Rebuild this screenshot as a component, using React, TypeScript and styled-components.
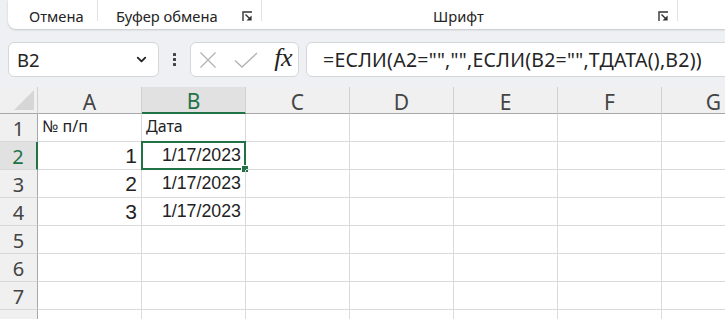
import React from "react";
import styled, { createGlobalStyle, css } from "styled-components";
import { ChevronDown } from "lucide-react";

const GREEN = "#217346";
const GRID = "#dadada";

const GlobalStyle = createGlobalStyle`
  html, body {
    margin: 0;
    padding: 0;
    background: #eef0f3;
    overflow: hidden;
  }
  body {
    font-family: "Noto Sans", "Open Sans", sans-serif;
  }
`;

const Page = styled.div`
  width: 725px;
  height: 319px;
  overflow: hidden;
  background: #eef0f3;
`;

/* Ribbon */
const Ribbon = styled.div`
  margin-left: 8px;
  height: 29px;
  background: #ffffff;
  border-bottom-left-radius: 8px;
  box-shadow: 0 1px 2px rgba(0, 0, 0, 0.18);
  display: flex;
  align-items: stretch;
`;

const Group = styled.div<{ $w: number; $pl: number }>`
  width: ${(p) => p.$w}px;
  padding-left: ${(p) => p.$pl}px;
  padding-right: 8px;
  box-sizing: border-box;
  display: flex;
  align-items: flex-start;
  justify-content: space-between;
  border-right: 1px solid #e2e2e2;
  height: 21px;
`;

const GroupLabel = styled.span`
  font-size: 14.7px;
  color: #242424;
  line-height: 1;
  padding-top: 9px;
`;

const Launcher = styled.svg`
  width: 11px;
  height: 11px;
  margin-top: 11px;
`;

const LauncherIcon = () => (
  <Launcher viewBox="0 0 11 11">
    <path d="M1 10 V1 H10" fill="none" stroke="#333" strokeWidth="1.4" />
    <path d="M3.5 3.5 L8.6 8.6" fill="none" stroke="#333" strokeWidth="1.4" />
    <path d="M4.5 9.6 H9.6 V4.5 Z" fill="#333" />
  </Launcher>
);

/* Formula bar */
const FormulaRow = styled.div`
  display: flex;
  align-items: center;
  margin-top: 13px;
  padding-left: 8px;
  height: 35px;
`;

const Box = styled.div`
  height: 35px;
  box-sizing: border-box;
  background: #ffffff;
  border: 1px solid #d4d6d9;
  border-radius: 6px;
  display: flex;
  align-items: center;
`;

const NameBox = styled(Box)`
  width: 151px;
  padding: 0 9px 0 8px;
  justify-content: space-between;
  font-size: 18.5px;
  color: #242424;
`;

const Dots = styled.div`
  width: 31px;
  display: flex;
  flex-direction: column;
  align-items: center;
  gap: 2px;
  span {
    width: 3px;
    height: 3px;
    background: #444;
    border-radius: 0.5px;
  }
`;

const FxBox = styled(Box)`
  width: 109px;
  padding: 0 6px 0 8px;
  justify-content: space-between;
`;

const Fx = styled.span`
  font-family: "Liberation Serif", "DejaVu Serif", serif;
  font-style: italic;
  font-size: 26px;
  color: #242424;
  line-height: 1;
  margin-top: -3px;
  letter-spacing: -0.5px;
`;

const FormulaBox = styled(Box)`
  flex: 1;
  margin-left: 7px;
  margin-right: -10px;
  padding-left: 16px;
  font-size: 19.5px;
  color: #242424;
  letter-spacing: 0.25px;
  white-space: nowrap;
`;

/* Grid */
const Sheet = styled.div`
  margin-top: 10px;
  display: grid;
  grid-template-columns: 38px repeat(7, 104px);
  grid-template-rows: 27px;
  grid-auto-rows: 28px;
  background: #ffffff;
  width: 766px;
`;

const Corner = styled.div`
  background: #f0f0f0;
  border-right: 1px solid #d0d0d0;
  border-bottom: 1px solid #a8a8a8;
  box-sizing: border-box;
  position: relative;
  &::after {
    content: "";
    position: absolute;
    right: 3px;
    bottom: 3px;
    width: 0;
    height: 0;
    border-left: 20px solid transparent;
    border-bottom: 20px solid #d6d6d6;
  }
`;

const ColHeader = styled.div<{ $sel?: boolean }>`
  background: ${(p) => (p.$sel ? "#e1e1e1" : "#f0f0f0")};
  color: ${(p) => (p.$sel ? GREEN : "#444")};
  border-right: 1px solid #d0d0d0;
  border-bottom: ${(p) => (p.$sel ? `2px solid ${GREEN}` : "1px solid #a8a8a8")};
  box-sizing: border-box;
  display: flex;
  align-items: center;
  justify-content: center;
  font-size: 21px;
  padding-top: 3px;
`;

const RowHeader = styled.div<{ $sel?: boolean }>`
  background: ${(p) => (p.$sel ? "#e1e1e1" : "#f0f0f0")};
  color: ${(p) => (p.$sel ? GREEN : "#444")};
  border-right: ${(p) => (p.$sel ? `2px solid ${GREEN}` : "1px solid #a8a8a8")};
  border-bottom: 1px solid #d8d8d8;
  box-sizing: border-box;
  display: flex;
  align-items: center;
  justify-content: center;
  font-size: 20px;
  padding-top: 2px;
`;

const Cell = styled.div<{ $kind?: "label" | "num" | "date"; $sel?: boolean }>`
  border-right: 1px solid ${GRID};
  border-bottom: 1px solid ${GRID};
  box-sizing: border-box;
  display: flex;
  align-items: flex-end;
  font-family: "Liberation Sans", Arial, sans-serif;
  color: #222;
  position: relative;
  white-space: nowrap;
  ${(p) =>
    p.$kind === "label" &&
    css`
      font-size: 16px;
      padding: 0 0 4px 4px;
      font-family: "Noto Sans", "Open Sans", sans-serif;
    `}
  ${(p) =>
    p.$kind === "num" &&
    css`
      font-size: 21px;
      justify-content: flex-end;
      padding: 0 4px 1px 0;
    `}
  ${(p) =>
    p.$kind === "date" &&
    css`
      font-size: 17.8px;
      justify-content: flex-end;
      padding: 0 4px 3px 0;
    `}
  ${(p) =>
    p.$sel &&
    css`
      &::before {
        content: "";
        position: absolute;
        left: -1px;
        top: -1px;
        right: -1px;
        bottom: -1px;
        border: 2px solid ${GREEN};
        pointer-events: none;
      }
      &::after {
        content: "";
        position: absolute;
        right: -4px;
        bottom: -4px;
        width: 6px;
        height: 6px;
        background: ${GREEN};
        border: 1px solid #fff;
      }
    `}
`;

const columns = ["A", "B", "C", "D", "E", "F", "G"];

type Row = { a?: string; b?: string; aKind?: "label" | "num"; bKind?: "label" | "date" };

const rows: Row[] = [
  { a: "№ п/п", aKind: "label", b: "Дата", bKind: "label" },
  { a: "1", aKind: "num", b: "1/17/2023", bKind: "date" },
  { a: "2", aKind: "num", b: "1/17/2023", bKind: "date" },
  { a: "3", aKind: "num", b: "1/17/2023", bKind: "date" },
  {},
  {},
  {},
  {},
];

const CrossIcon = () => (
  <svg width="18" height="18" viewBox="0 0 18 18">
    <path d="M1.5 1.5 L16.5 16.5 M16.5 1.5 L1.5 16.5" stroke="#b4b4b4" strokeWidth="1.4" fill="none" />
  </svg>
);

const CheckIcon = () => (
  <svg width="24" height="16" viewBox="0 0 24 16">
    <path d="M1 8.5 L8 15 L23 1" stroke="#b4b4b4" strokeWidth="1.4" fill="none" />
  </svg>
);

export default function App() {
  return (
    <Page>
      <GlobalStyle />
      <Ribbon>
        <Group $w={90} $pl={21}>
          <GroupLabel>Отмена</GroupLabel>
        </Group>
        <Group $w={164} $pl={18}>
          <GroupLabel>Буфер обмена</GroupLabel>
          <LauncherIcon />
        </Group>
        <Group $w={416} $pl={171}>
          <GroupLabel>Шрифт</GroupLabel>
          <LauncherIcon />
        </Group>
      </Ribbon>

      <FormulaRow>
        <NameBox>
          <span>B2</span>
          <ChevronDown size={15} strokeWidth={3} color="#242424" />
        </NameBox>
        <Dots>
          <span />
          <span />
          <span />
        </Dots>
        <FxBox>
          <CrossIcon />
          <CheckIcon />
          <Fx>fx</Fx>
        </FxBox>
        <FormulaBox>=ЕСЛИ(A2="","",ЕСЛИ(B2="",ТДАТА(),B2))</FormulaBox>
      </FormulaRow>

      <Sheet>
        <Corner />
        {columns.map((c) => (
          <ColHeader key={c} $sel={c === "B"}>
            {c}
          </ColHeader>
        ))}
        {rows.map((r, i) => (
          <React.Fragment key={i}>
            <RowHeader $sel={i === 1}>{i < 7 ? i + 1 : ""}</RowHeader>
            <Cell $kind={r.aKind}>{r.a}</Cell>
            <Cell $kind={r.bKind} $sel={i === 1}>
              {r.b}
            </Cell>
            {columns.slice(2).map((c) => (
              <Cell key={c} />
            ))}
          </React.Fragment>
        ))}
      </Sheet>
    </Page>
  );
}
